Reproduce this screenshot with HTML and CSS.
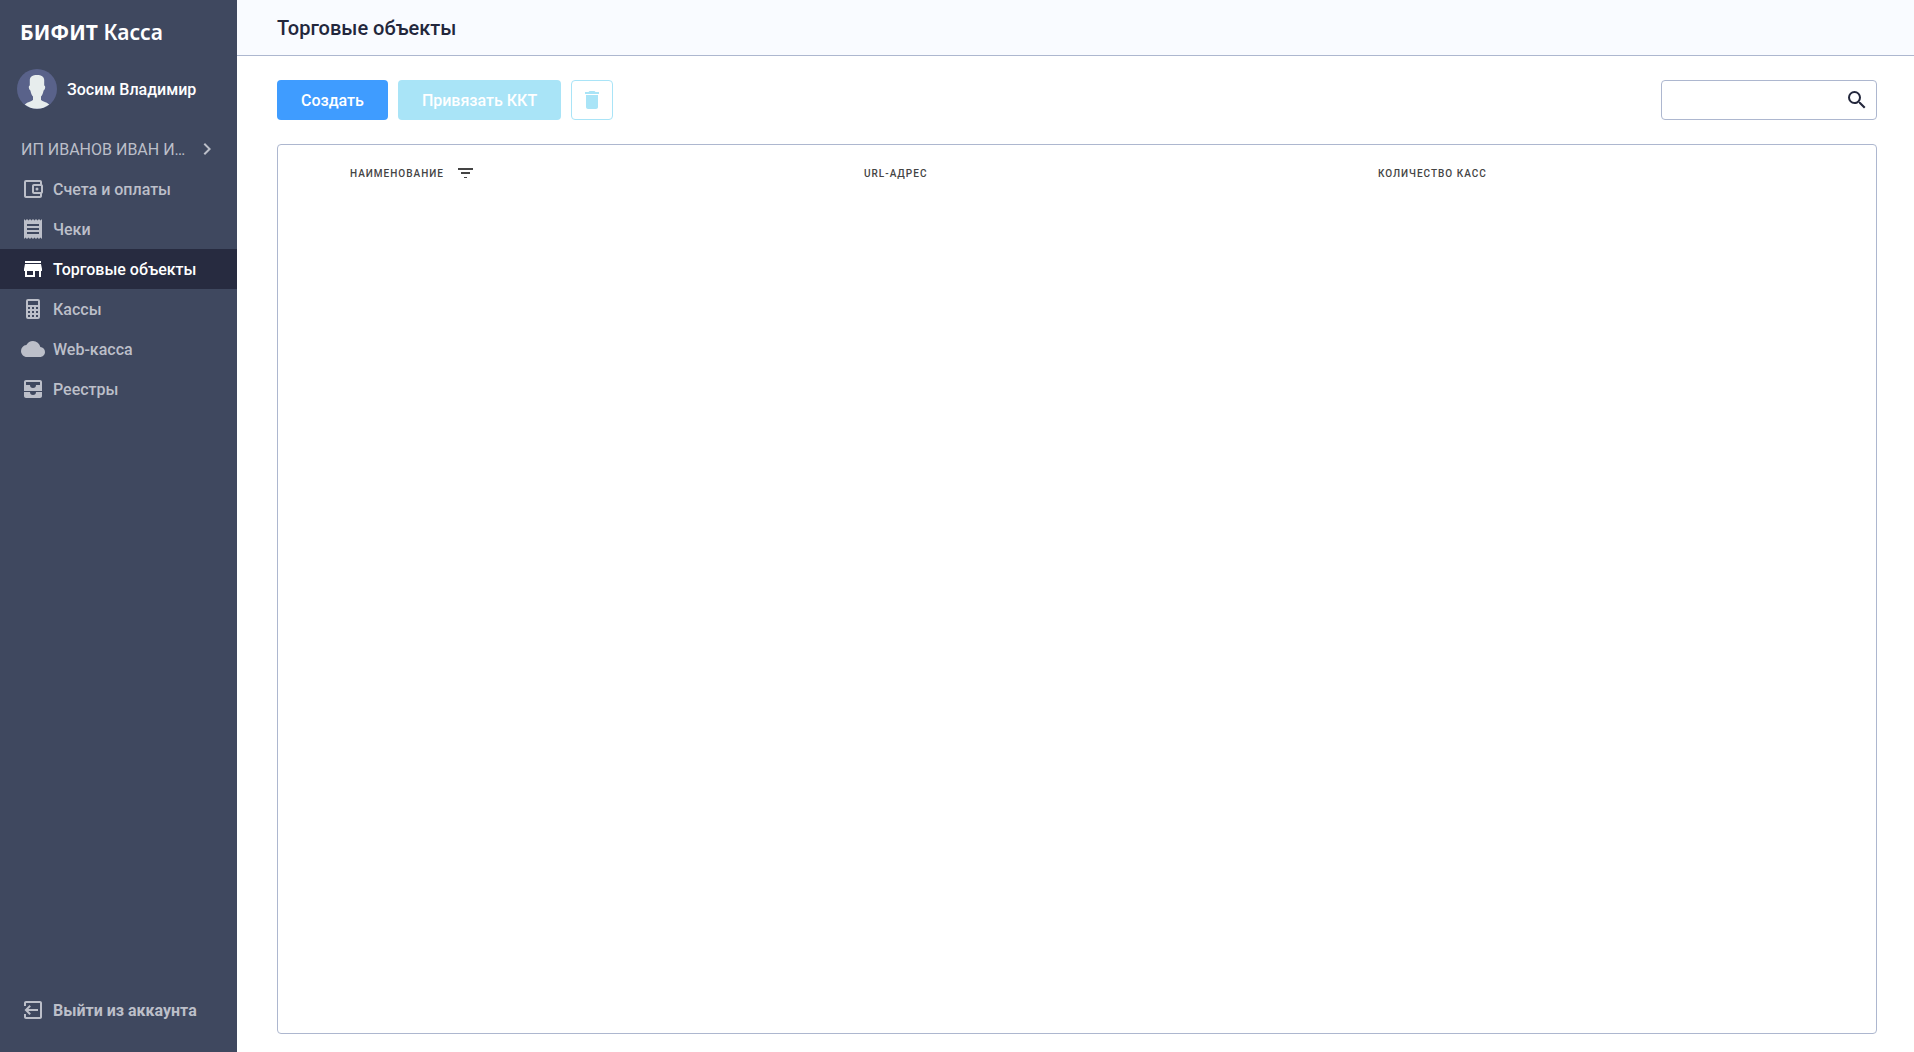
FILE: index.html
```html
<!DOCTYPE html>
<html lang="ru">
<head>
  <meta charset="utf-8">
  <title>Торговые объекты</title>
  <link rel="stylesheet" href="styles.css">
</head>
<body>
  <div class="app">
    <aside class="sidebar">
      <a class="logo" href="#"><b>БИФИТ</b> Касса</a>
      <a class="user" href="#">
        <svg class="avatar" viewBox="0 0 40 40" aria-hidden="true">
          <circle class="avatar-back" cx="20" cy="20" r="20"/>
          <path class="avatar-person" d="M20 6c4.500 0 7 1.800 7.200 5v5.500c.9.200 1.100 1.200.9 2.500-.2 1.200-.7 2.200-1.500 2.400-.5 2.600-1.300 4.600-2.600 6.100v3.200c.5 1.400 5.500 2 8.300 4.900A20 20 0 0 1 7.700 35.600c2.800-2.900 7.800-3.500 8.300-4.900v-3.200c-1.300-1.500-2.100-3.500-2.600-6.100-.8-.2-1.300-1.200-1.500-2.400-.2-1.300 0-2.300.9-2.500V11C13 7.800 15.500 6 20 6z"/>
        </svg>
        <span class="label">Зосим Владимир</span>
      </a>
      <button class="org" type="button">
        <span class="label">ИП ИВАНОВ ИВАН И…</span>
        <svg class="icon" viewBox="0 0 24 24" aria-hidden="true"><path d="M10 6 8.590 7.410 13.170 12l-4.580 4.590L10 18l6-6z"/></svg>
      </button>
      <nav class="menu">
        <a class="item" href="#">
          <svg class="icon" viewBox="0 0 24 24" aria-hidden="true"><path d="M21 7.280V5c0-1.100-.9-2-2-2H5a2 2 0 0 0-2 2v14c0 1.100.9 2 2 2h14c1.100 0 2-.9 2-2v-2.280c.59-.35 1-.98 1-1.720V9c0-.74-.41-1.380-1-1.720zM20 9v6h-7V9h7zM5 19V5h14v2h-6c-1.100 0-2 .9-2 2v6c0 1.100.9 2 2 2h6v2H5z"/><circle cx="16" cy="12" r="1.500"/></svg>
          <span class="label">Счета и оплаты</span>
        </a>
        <a class="item" href="#">
          <svg class="icon" viewBox="0 0 24 24" aria-hidden="true"><path d="M18 17H6v-2h12v2zm0-4H6v-2h12v2zm0-4H6V7h12v2zM3 22l1.500-1.500L6 22l1.500-1.500L9 22l1.500-1.500L12 22l1.500-1.500L15 22l1.500-1.500L18 22l1.500-1.500L21 22V2l-1.500 1.500L18 2l-1.500 1.500L15 2l-1.500 1.500L12 2l-1.500 1.500L9 2 7.500 3.500 6 2 4.500 3.500 3 2v20z"/></svg>
          <span class="label">Чеки</span>
        </a>
        <a class="item item-active" href="#" aria-current="page">
          <svg class="icon" viewBox="0 0 24 24" aria-hidden="true"><path d="M20 4H4v2h16V4zm1 10v-2l-1-5H4l-1 5v2h1v6h10v-6h4v6h2v-6h1zm-9 4H6v-4h6v4z"/></svg>
          <span class="label">Торговые объекты</span>
        </a>
        <a class="item" href="#">
          <svg class="icon" viewBox="0 0 24 24" aria-hidden="true"><path d="M7 2h10a2 2 0 0 1 2 2v16a2 2 0 0 1-2 2H7a2 2 0 0 1-2-2V4a2 2 0 0 1 2-2m0 2v4h10V4H7m0 6v2h2v-2H7m4 0v2h2v-2h-2m4 0v2h2v-2h-2m-8 4v2h2v-2H7m4 0v2h2v-2h-2m4 0v2h2v-2h-2m-8 4v2h2v-2H7m4 0v2h2v-2h-2m4 0v2h2v-2h-2z"/></svg>
          <span class="label">Кассы</span>
        </a>
        <a class="item" href="#">
          <svg class="icon" viewBox="0 0 24 24" aria-hidden="true"><path d="M19.350 10.040A7.490 7.490 0 0 0 12 4C9.110 4 6.600 5.640 5.350 8.040A5.994 5.994 0 0 0 0 14c0 3.310 2.690 6 6 6h13c2.760 0 5-2.240 5-5 0-2.640-2.050-4.780-4.650-4.960z"/></svg>
          <span class="label">Web-касса</span>
        </a>
        <a class="item" href="#">
          <svg class="icon" viewBox="0 0 24 24" aria-hidden="true"><path d="M19 3H5c-1.100 0-2 .9-2 2v9h18V5c0-1.100-.9-2-2-2zm0 5h-4a3 3 0 0 1-6 0H5V5h14zM15 15h6v4c0 1.100-.9 2-2 2H5c-1.100 0-2-.9-2-2v-4h6a3 3 0 0 0 6 0z"/></svg>
          <span class="label">Реестры</span>
        </a>
      </nav>
      <a class="item logout" href="#">
        <svg class="icon" viewBox="0 0 24 24" aria-hidden="true"><path d="M3 8V5c0-1.100.9-2 2-2h14c1.100 0 2 .9 2 2v14c0 1.100-.9 2-2 2H5c-1.100 0-2-.9-2-2v-3h2v3h14V5H5v3z"/><path d="m8.500 7 1.400 1.400L7.300 11H17v2H7.300l2.600 2.600L8.500 17l-5-5z"/></svg>
        <span class="label">Выйти из аккаунта</span>
      </a>
    </aside>
    <div class="page">
      <header class="header"><h1 class="title">Торговые объекты</h1></header>
      <main class="content">
        <div class="toolbar">
          <button class="button" type="button">Создать</button>
          <button class="button button-off" type="button" disabled>Привязать ККТ</button>
          <button class="button-trash" type="button" disabled aria-label="Удалить">
            <svg class="icon" viewBox="0 0 24 24" aria-hidden="true"><path d="M6 19c0 1.100.9 2 2 2h8c1.100 0 2-.9 2-2V7H6v12zM19 4h-3.500l-1-1h-5l-1 1H5v2h14V4z"/></svg>
          </button>
          <label class="search">
            <input class="search-input" type="text" aria-label="Поиск">
            <svg class="icon" viewBox="0 0 24 24" aria-hidden="true"><path d="M15.500 14h-.79l-.28-.27A6.471 6.471 0 0 0 16 9.500 6.500 6.500 0 1 0 9.500 16c1.610 0 3.090-.59 4.230-1.570l.27.28v.79l5 4.990L20.490 19l-4.990-5zm-6 0C7.010 14 5 11.990 5 9.500S7.010 5 9.500 5 14 7.010 14 9.500 11.990 14 9.500 14z"/></svg>
          </label>
        </div>
        <div class="panel">
          <table class="table">
            <thead>
              <tr>
                <td class="pick"></td>
                <th scope="col"><span class="column">Наименование
                  <svg class="filter" viewBox="0 0 16 16" aria-hidden="true"><path d="M0 2h15v2H0zM3 6h9v2H3zM6 11h3v1H6z"/></svg></span></th>
                <th scope="col">URL-адрес</th>
                <th scope="col">Количество касс</th>
              </tr>
            </thead>
          </table>
        </div>
      </main>
    </div>
  </div>
</body>
</html>
```
FILE: styles.css
```css
* { box-sizing: border-box; }

body {
  margin: 0;
  font: 500 16px/24px Roboto, "Noto Sans", sans-serif;
  color: #23273c;
  background: #fff;
}

button, input { font: inherit; }
a { color: inherit; text-decoration: none; }

.icon {
  flex: none;
  width: 24px;
  height: 24px;
  fill: currentColor;
}

.label { padding-top: 2px; white-space: nowrap; }

.app { display: flex; min-height: 100vh; }

.sidebar {
  flex: none;
  display: flex;
  flex-direction: column;
  width: 237px;
  padding: 16px 0 22px;
  color: #bcbfc9;
  background: #3f485f;
}

.logo {
  padding: 0 20px;
  font: 600 21px/32px "Noto Sans", sans-serif;
  color: #fff;
}
.logo b { font-weight: 700; }

.user {
  display: flex;
  align-items: center;
  gap: 10px;
  margin: 21px 0 20px;
  padding: 0 17px;
  color: #fff;
}
.avatar { width: 40px; height: 40px; }
.avatar-back { fill: #59628a; }
.avatar-person { fill: #e7eded; }

.org {
  display: flex;
  align-items: center;
  justify-content: space-between;
  gap: 8px;
  height: 40px;
  padding: 0 18px 0 21px;
  border: 0;
  color: inherit;
  background: none;
  font-weight: 400;
}

.item {
  display: flex;
  align-items: center;
  gap: 8px;
  height: 40px;
  padding: 0 21px;
}
.item-active { color: #fff; background: #272b40; }
.logout { margin-top: auto; font-weight: 700; }

.page {
  flex: 1;
  display: flex;
  flex-direction: column;
  min-width: 0;
}

.header {
  padding: 12px 40px 11px;
  border-bottom: 1px solid #adb7cf;
  background: #f9fbff;
}
.title { margin: 0; font-size: 20px; line-height: 32px; font-weight: 500; }

.content {
  flex: 1;
  display: flex;
  flex-direction: column;
  gap: 24px;
  padding: 24px 37px 18px 40px;
}

.toolbar { display: flex; gap: 10px; }
.button {
  height: 40px;
  padding: 2px 24px 0;
  border: 0;
  border-radius: 4px;
  color: #fff;
  background: #3f9cff;
}
.button-off { background: #a9e4f7; }
.button-trash {
  display: flex;
  align-items: center;
  justify-content: center;
  width: 42px;
  padding: 0;
  border: 1px solid #a9e4f7;
  border-radius: 4px;
  color: #a9e4f7;
  background: #fff;
}

.search {
  display: flex;
  align-items: center;
  width: 216px;
  height: 40px;
  margin-left: auto;
  padding: 0 7px;
  border: 1px solid #adb7cf;
  border-radius: 4px;
}
.search-input {
  flex: 1;
  min-width: 0;
  padding: 0;
  border: 0;
  outline: 0;
  background: none;
}

.panel {
  flex: 1;
  border: 1px solid #adb7cf;
  border-radius: 4px;
}
.table { width: 100%; table-layout: fixed; border-collapse: collapse; }
.pick { width: 56px; }
.table th {
  height: 56px;
  padding: 2px 16px 0;
  font-size: 10px;
  line-height: 16px;
  font-weight: 500;
  letter-spacing: 1px;
  text-align: left;
  text-transform: uppercase;
  color: #444;
}
.column { display: flex; align-items: center; gap: 14px; }
.filter { width: 16px; height: 16px; fill: #444; }
```
